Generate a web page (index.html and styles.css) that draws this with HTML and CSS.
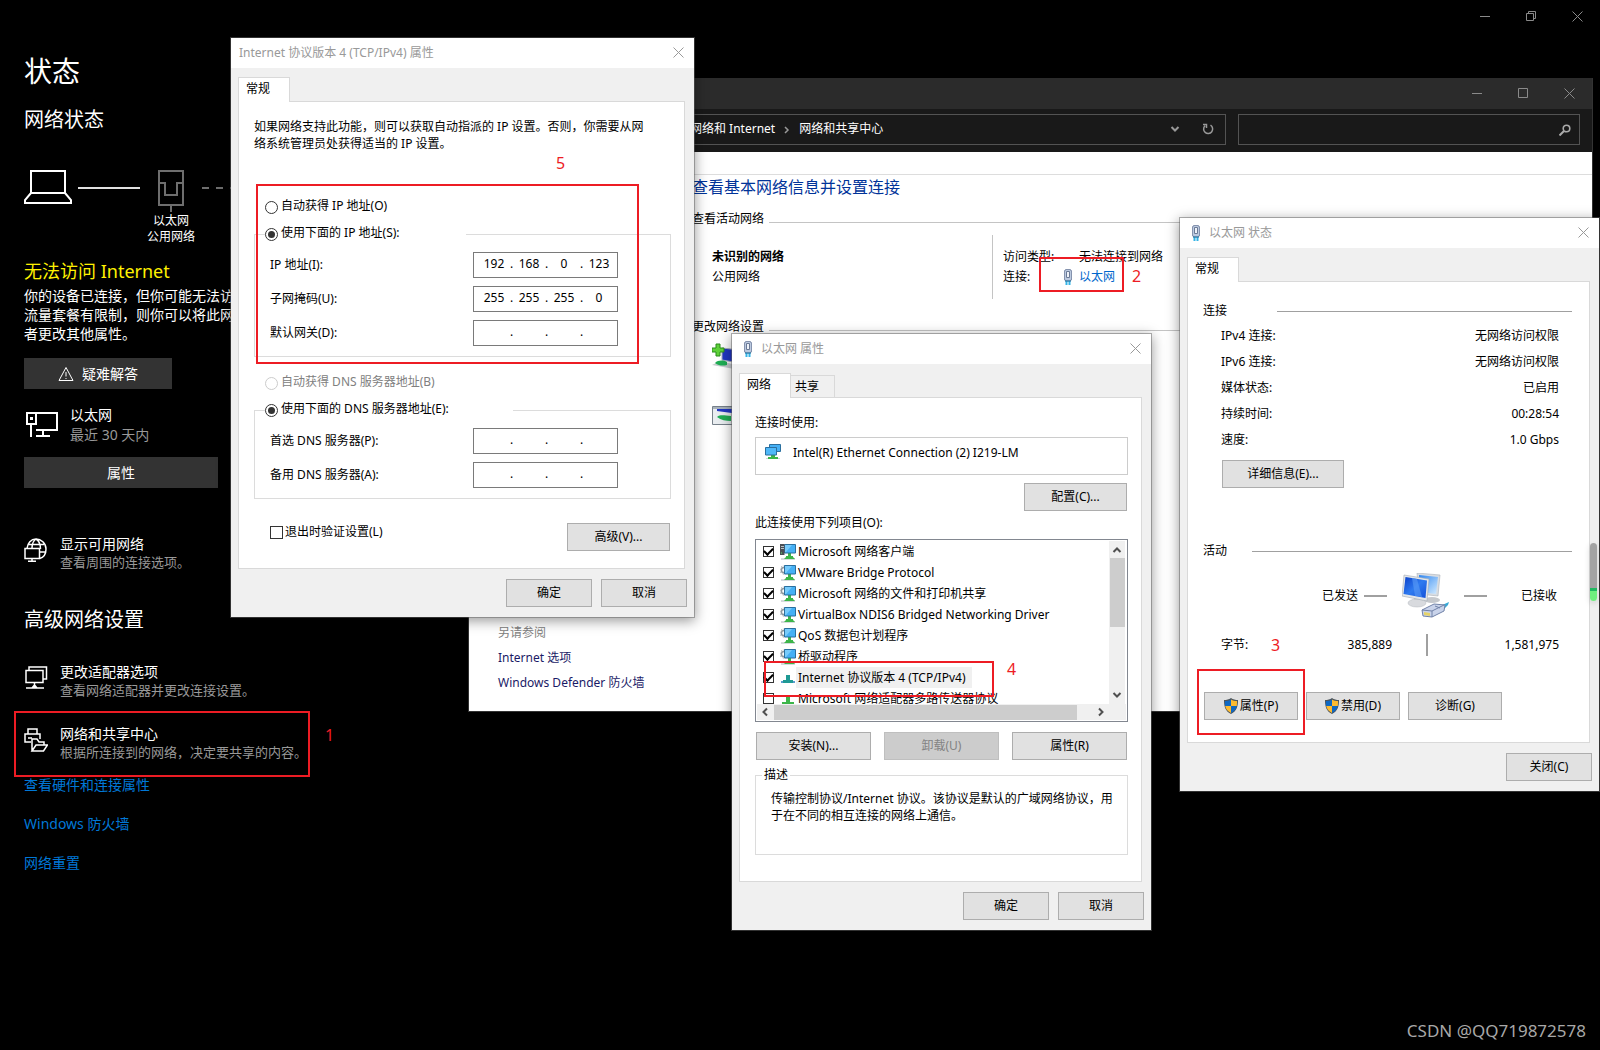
FILE: index.html
```html
<!DOCTYPE html>
<html lang="zh-CN">
<head>
<meta charset="utf-8">
<meta name="viewport" content="width=device-width, initial-scale=1">
<title>网络状态</title>
<link rel="stylesheet" href="styles.css">
</head>
<body>
<svg class="defs" aria-hidden="true">
  <symbol id="close" viewBox="0 0 11 11"><path d="M.5.5l10 10M10.500.5l-10 10" fill="none" stroke="currentColor"/></symbol>
  <symbol id="min" viewBox="0 0 11 11"><path d="M0 5.500h10" fill="none" stroke="currentColor"/></symbol>
  <symbol id="max" viewBox="0 0 11 11"><path d="M.5.5h9v9h-9z" fill="none" stroke="currentColor"/></symbol>
  <symbol id="restore" viewBox="0 0 11 11"><path d="M.5 2.500h7v7h-7zM2.500 2.500v-2h7v7h-2" fill="none" stroke="currentColor"/></symbol>
  <symbol id="plug" viewBox="0 0 10 16">
    <path d="M2.500.5h5v1h1V11h-1v1h-5v-1h-1V1.500h1z" fill="#bccae0" stroke="#8593ae"/>
    <path d="M3.500 2.500h3v6h-3z" fill="#eef2f9" stroke="#6b7a96"/>
    <path d="M3.500 12v4M6.500 12v4" stroke="#35b4e6" stroke-width="2"/><path d="M2 12h6" stroke="#1c6f9c"/>
  </symbol>
  <symbol id="pc" viewBox="0 0 16 16">
    <path d="M1 14h14v2H1z" fill="#d5dadd"/>
    <path d="M8 9h3v3h2v1l2 2H4l2-2v-1h2z" fill="#3cb549"/>
    <path d="M4.500.5h11v8.500h-11z" fill="#45b0f5" stroke="#2b6f9e"/><path d="M5 1h7L6 8H5z" fill="#77cbfb"/>
  </symbol>
  <symbol id="client" viewBox="0 0 16 16">
    <use href="#pc"/><path d="M0 0h4.500v11H0z" fill="#4a4f54"/><path d="M1 2.500h3M1 4.500h3" stroke="#b9c0c6"/><path d="M1 9h1" stroke="#5fe06a"/>
  </symbol>
  <symbol id="service" viewBox="0 0 16 16">
    <circle cx="4" cy="5" r="2.600" fill="none" stroke="#8f989e" stroke-width="1.500"/>
    <circle cx="4" cy="5" r="4" fill="none" stroke="#8f989e" stroke-dasharray="1.500 1.500"/>
    <use href="#pc"/>
  </symbol>
  <symbol id="protocol" viewBox="0 0 16 16"><path d="M6 5h4v5h3v2h1v1H2v-1h1v-2h3z" fill="#1f9a94"/><path d="M1 11h2v2H1zM13 11h2v2h-2z" fill="#5b9bd0"/></symbol>
  <symbol id="protocol2" viewBox="0 0 16 16"><path d="M6 6h4v5h4v3H2v-3h4z" fill="#3cb549"/></symbol>
  <symbol id="adapter" viewBox="0 0 16 16">
    <path d="M1 14h14v1H1z" fill="#cfd5d8"/><path d="M6 11h4v2h3v2H3v-2h3z" fill="#3cb549"/>
    <path d="M4.500.5h11v7h-11z" fill="#45b0f5" stroke="#2b6f9e"/><path d="M.5 3.500h11v7.500H.5z" fill="#4fb8f9" stroke="#2b6f9e"/>
  </symbol>
  <symbol id="shield" viewBox="0 0 14 16">
    <path d="M7 0c2 1.400 4.500 2 7 2 0 6-1 11-7 14C1 13 0 8 0 2c2.500 0 5-.6 7-2z" fill="#4b545c"/>
    <path d="M7 1.400V8H1.200C1 6.500 1 4.500 1 3c2.200-.1 4.200-.6 6-1.600z" fill="#0f68c2"/>
    <path d="M7 1.400V8h5.800c.2-1.500.2-3.500.2-5-2.200-.1-4.200-.6-6-1.600zM7 8H1.200C1.800 11 3.500 13.200 7 14.900z" fill="#fdbb30"/>
    <path d="M7 8h5.800c-.6 3-2.300 5.200-5.800 6.900z" fill="#0f68c2"/>
  </symbol>
  <symbol id="chev" viewBox="0 0 10 10"><path d="M1.500 3l3.500 3.500L8.500 3" fill="none" stroke="currentColor" stroke-width="2"/></symbol>
</svg>

<main class="settings">
  <header class="captions">
    <button aria-label="最小化"><svg><use href="#min"/></svg></button>
    <button aria-label="还原"><svg><use href="#restore"/></svg></button>
    <button aria-label="关闭"><svg><use href="#close"/></svg></button>
  </header>
  <div class="column">
    <h1>状态</h1>
    <h2>网络状态</h2>
    <div class="diagram">
      <svg class="laptop" viewBox="0 0 48 34"><path d="M7 1h34v22H7zM7 23L1 30v3h46v-3l-6-7" fill="none" stroke="#fff" stroke-width="2"/></svg>
      <span class="wire"></span>
      <div class="node">
        <svg class="port" viewBox="0 0 26 42"><path d="M1 1h24v34H1zM13 35v7M1 13h6v12h12V13h6" fill="none" stroke="#6e6e6e" stroke-width="2"/></svg>
        <span>以太网</span><span>公用网络</span>
      </div>
      <span class="dashes"></span>
    </div>
    <h3>无法访问 Internet</h3>
    <p class="explain">你的设备已连接，但你可能无法访<br>流量套餐有限制，则你可以将此网<br>者更改其他属性。</p>
    <button class="flat trouble"><svg viewBox="0 0 16 16"><path d="M8 1.500L15 14.500H1z M8 6v4.500M8 12v1" fill="none" stroke="#fff"/></svg>疑难解答</button>
    <div class="conn">
      <svg viewBox="0 0 32 26"><path d="M10 1h21v17H10M1 1h9v11H1zM5 12v13M17 18v6M10 24h14" fill="none" stroke="#fff" stroke-width="2"/><path d="M4 5h3v3H4z" fill="#fff"/></svg>
      <div><strong>以太网</strong><span>最近 30 天内</span></div>
    </div>
    <button class="flat props">属性</button>
    <a class="item first" href="#">
      <svg viewBox="0 0 24 24" fill="none" stroke="#fff" stroke-width="1.500"><path d="M3 10.500C3.500 5 7 1 12 1s10 4 10 10c0 5-2.500 8.500-6.500 9.500M12 1C9 3 8 6 8 10M12 1c3.500 2 4.500 6 4.500 10M4.500 6.500h15.500M16 14h5"/><path d="M1 10.500h14.500v10H1zM8 20.500V23M4 23.200h8"/></svg>
      <span>显示可用网络<small>查看周围的连接选项。</small></span>
    </a>
    <h2 class="advanced">高级网络设置</h2>
    <a class="item adapters" href="#">
      <svg viewBox="0 0 24 24" fill="none" stroke="#fff" stroke-width="1.500"><path d="M2 4.500h17v12H2zM5 4V1h17.500v12H19M10.500 16.500v5M2 22h6M13 22h7M8 22l2.500-3 2.500 3z"/></svg>
      <span>更改适配器选项<small>查看网络适配器并更改连接设置。</small></span>
    </a>
    <a class="item sharing" href="#">
      <svg viewBox="0 0 24 24" fill="none" stroke="#fff" stroke-width="1.500"><path d="M4 6V1h9v5M7 14H1V6h15v5M4 10h4"/><path d="M8 23V11h5l2 3h5v3M8 23l4-6h11.500l-4 6z"/></svg>
      <span>网络和共享中心<small>根据所连接到的网络，决定要共享的内容。</small></span>
    </a>
    <nav class="links"><a href="#">查看硬件和连接属性</a><a href="#">Windows 防火墙</a><a href="#">网络重置</a></nav>
  </div>
</main>

<section class="explorer" aria-label="网络和共享中心">
  <header class="captions">
    <button aria-label="最小化"><svg><use href="#min"/></svg></button>
    <button aria-label="最大化"><svg><use href="#max"/></svg></button>
    <button aria-label="关闭"><svg><use href="#close"/></svg></button>
  </header>
  <div class="toolbar">
    <div class="address">
      <span>网络和 Internet</span><svg class="crumb" viewBox="0 0 6 8"><path d="M1 1l3 3-3 3" fill="none" stroke="#999" stroke-width="1.500"/></svg><span class="here">网络和共享中心</span>
      <svg class="drop"><use href="#chev"/></svg>
      <button aria-label="刷新"><svg viewBox="0 0 12 12"><path d="M8.500 2.200A4.500 4.500 0 1 1 3 2.800M1 1.500h3.500V5" fill="none" stroke="#999" stroke-width="1.500"/></svg></button>
    </div>
    <div class="search"><input type="text" aria-label="搜索"><svg viewBox="0 0 12 12"><circle cx="7.500" cy="4.500" r="3.300" fill="none" stroke="#aaa" stroke-width="1.600"/><path d="M5 7L.5 11.500" stroke="#aaa" stroke-width="2"/></svg></div>
  </div>
  <div class="content">
    <aside><span>另请参阅</span><a href="#">Internet 选项</a><a href="#">Windows Defender 防火墙</a></aside>
    <div class="center">
      <h2>查看基本网络信息并设置连接</h2>
      <div class="head"><span>查看活动网络</span></div>
      <div class="network">
        <div><b>未识别的网络</b><span>公用网络</span></div>
        <dl><dt>访问类型:</dt><dd>无法连接到网络</dd><dt>连接:</dt><dd class="linked"><svg><use href="#plug"/></svg><a href="#">以太网</a></dd></dl>
      </div>
      <div class="head second"><span>更改网络设置</span></div>
      <div class="tasks">
        <svg viewBox="0 0 32 32"><path d="M10 6l18 2v13l-18-3z" fill="#2237c4" stroke="#a9b0c4"/><path d="M0 23l8-4 20 5v4z" fill="#c7ccd0"/><path d="M3 21c3-3 8-3 12-1v3c-4 1-8 1-12-2z" fill="#1fae54"/><path d="M4 2h4v4h4v4H8v4H4v-4H0V6h4z" fill="#5fd23a" stroke="#2b8b1c"/></svg>
        <svg viewBox="0 0 32 32"><path d="M.5 6.500h31v18H.5z" fill="#e9edf0" stroke="#76808a"/><path d="M1 7h30v2H1z" fill="#a8b2bb"/><path d="M5 9h22v5l-22-3z" fill="#2237c4"/><path d="M5 17c4-3 8-1 14-1v5c-5 0-10-1-14-4z" fill="#1fae54"/></svg>
      </div>
    </div>
  </div>
</section>

<section class="dialog ipv4" aria-label="Internet 协议版本 4 (TCP/IPv4) 属性">
  <header><h2>Internet 协议版本 4 (TCP/IPv4) 属性</h2><button aria-label="关闭"><svg><use href="#close"/></svg></button></header>
  <div class="tabs"><button class="on">常规</button></div>
  <form class="panel">
    <p>如果网络支持此功能，则可以获取自动指派的 IP 设置。否则，你需要从网<br>络系统管理员处获得适当的 IP 设置。</p>
    <label class="radio auto-ip"><input type="radio" name="ip">自动获得 IP 地址(O)</label>
    <fieldset>
      <legend><label class="radio"><input type="radio" name="ip" checked>使用下面的 IP 地址(S):</label></legend>
      <div class="field"><label for="ip1">IP 地址(I):</label><div class="quad"><input id="ip1" value="192">.<input aria-label="IP 2" value="168">.<input aria-label="IP 3" value="0">.<input aria-label="IP 4" value="123"></div></div>
      <div class="field"><label for="mask1">子网掩码(U):</label><div class="quad"><input id="mask1" value="255">.<input aria-label="掩码 2" value="255">.<input aria-label="掩码 3" value="255">.<input aria-label="掩码 4" value="0"></div></div>
      <div class="field"><label for="gw1">默认网关(D):</label><div class="quad"><input id="gw1">.<input aria-label="网关 2">.<input aria-label="网关 3">.<input aria-label="网关 4"></div></div>
    </fieldset>
    <label class="radio auto-dns"><input type="radio" name="dns" disabled>自动获得 DNS 服务器地址(B)</label>
    <fieldset>
      <legend class="wide"><label class="radio"><input type="radio" name="dns" checked>使用下面的 DNS 服务器地址(E):</label></legend>
      <div class="field"><label for="dnsa">首选 DNS 服务器(P):</label><div class="quad"><input id="dnsa">.<input aria-label="首选 2">.<input aria-label="首选 3">.<input aria-label="首选 4"></div></div>
      <div class="field"><label for="dnsb">备用 DNS 服务器(A):</label><div class="quad"><input id="dnsb">.<input aria-label="备用 2">.<input aria-label="备用 3">.<input aria-label="备用 4"></div></div>
    </fieldset>
    <div class="last"><label class="tick"><input type="checkbox">退出时验证设置(L)</label><button type="button" class="btn w103">高级(V)...</button></div>
  </form>
  <footer><button class="btn w86">确定</button><button class="btn w86">取消</button></footer>
</section>

<section class="dialog ether" aria-label="以太网 属性">
  <header><svg class="plug"><use href="#plug"/></svg><h2>以太网 属性</h2><button aria-label="关闭"><svg><use href="#close"/></svg></button></header>
  <div class="tabs"><button class="on">网络</button><button>共享</button></div>
  <form class="panel">
    <span class="cap">连接时使用:</span>
    <div class="device"><svg><use href="#adapter"/></svg>Intel(R) Ethernet Connection (2) I219-LM</div>
    <button type="button" class="btn w103 config">配置(C)...</button>
    <span class="cap items-cap">此连接使用下列项目(O):</span>
    <div class="list">
      <ul>
        <li><label><input type="checkbox" checked><svg><use href="#client"/></svg><span>Microsoft 网络客户端</span></label></li>
        <li><label><input type="checkbox" checked><svg><use href="#service"/></svg><span>VMware Bridge Protocol</span></label></li>
        <li><label><input type="checkbox" checked><svg><use href="#service"/></svg><span>Microsoft 网络的文件和打印机共享</span></label></li>
        <li><label><input type="checkbox" checked><svg><use href="#service"/></svg><span>VirtualBox NDIS6 Bridged Networking Driver</span></label></li>
        <li><label><input type="checkbox" checked><svg><use href="#service"/></svg><span>QoS 数据包计划程序</span></label></li>
        <li><label><input type="checkbox" checked><svg><use href="#service"/></svg><span>桥驱动程序</span></label></li>
        <li><label><input type="checkbox" checked><svg><use href="#protocol"/></svg><span class="sel">Internet 协议版本 4 (TCP/IPv4)</span></label></li>
        <li><label><input type="checkbox"><svg><use href="#protocol2"/></svg><span>Microsoft 网络适配器多路传送器协议</span></label></li>
      </ul>
      <div class="vbar"><svg class="up"><use href="#chev"/></svg><i></i><svg><use href="#chev"/></svg></div>
      <div class="hbar"><svg class="left"><use href="#chev"/></svg><i></i><svg class="right"><use href="#chev"/></svg></div>
    </div>
    <div class="trio"><button type="button" class="btn">安装(N)...</button><button type="button" class="btn" disabled>卸载(U)</button><button type="button" class="btn">属性(R)</button></div>
    <fieldset><legend>描述</legend><p>传输控制协议/Internet 协议。该协议是默认的广域网络协议，用<br>于在不同的相互连接的网络上通信。</p></fieldset>
  </form>
  <footer><button class="btn w86">确定</button><button class="btn w86">取消</button></footer>
</section>

<section class="dialog status" aria-label="以太网 状态">
  <header><svg class="plug"><use href="#plug"/></svg><h2>以太网 状态</h2><button aria-label="关闭"><svg><use href="#close"/></svg></button></header>
  <div class="tabs"><button class="on">常规</button></div>
  <div class="panel">
    <h3 class="rule">连接</h3>
    <table>
      <tr><th>IPv4 连接:</th><td>无网络访问权限</td></tr>
      <tr><th>IPv6 连接:</th><td>无网络访问权限</td></tr>
      <tr><th>媒体状态:</th><td>已启用</td></tr>
      <tr><th>持续时间:</th><td>00:28:54</td></tr>
      <tr><th>速度:</th><td>1.0 Gbps</td></tr>
    </table>
    <button class="btn details">详细信息(E)...</button>
    <h3 class="rule activity">活动</h3>
    <div class="traffic">
      <span>已发送</span><i></i>
      <svg viewBox="0 0 48 46">
        <defs><linearGradient id="scr" x2="1" y2="1"><stop stop-color="#0a3fc9"/><stop offset=".5" stop-color="#2f7bf0"/><stop offset="1" stop-color="#1450d8"/></linearGradient><linearGradient id="scr2" x2="1" y2="1"><stop stop-color="#2f86f0"/><stop offset="1" stop-color="#d4ecff"/></linearGradient></defs>
        <ellipse cx="30" cy="27" rx="8" ry="3" fill="#c5c8cc"/>
        <path d="M15 0l23 2-2 21-19-2z" fill="#d9dde2" stroke="#aab0b8" stroke-width=".6"/><path d="M17 2l19 2-2 17-17-2z" fill="url(#scr2)"/>
        <path d="M12 24h8l1 6h-9z" fill="#c2c6cb"/><ellipse cx="15" cy="30" rx="9" ry="4" fill="#d8dade" stroke="#b3b7bc" stroke-width=".5"/>
        <path d="M2 2l25 4-2 22-25-5z" fill="#e2e6ea" stroke="#a4abb4" stroke-width=".6"/><path d="M3.500 4L25 7.500 23.500 25 1.500 21z" fill="url(#scr)"/><path d="M10 5l5 1 5 18-7-1z" fill="#5b9cf7" opacity=".6"/>
        <path d="M38 33l9-4-1 3-5 5z" fill="#38a9d6"/><path d="M20 37l12-6 11 1-1 6-12 6-9-1z" fill="#c9d3ea" stroke="#7182a8"/><path d="M20 37l10 1v6M30 38l12-6M33 33l5 2" fill="none" stroke="#7182a8"/><path d="M22 39l6 1v3l-6-1z" fill="#e5d36a"/>
      </svg>
      <i></i><span>已接收</span>
    </div>
    <div class="bytes"><span>字节:</span><span>385,889</span><i></i><span>1,581,975</span></div>
    <div class="actions"><button class="btn"><svg><use href="#shield"/></svg>属性(P)</button><button class="btn"><svg><use href="#shield"/></svg>禁用(D)</button><button class="btn">诊断(G)</button></div>
  </div>
  <footer><button class="btn w86">关闭(C)</button></footer>
</section>

<div class="thumb"></div>
<div class="mark m1"></div><span class="num n1">1</span>
<div class="mark m2"></div><span class="num n2">2</span>
<div class="mark m3"></div><span class="num n3">3</span>
<div class="mark m4"></div><span class="num n4">4</span>
<div class="mark m5"></div><span class="num n5">5</span>
<div class="watermark">CSDN @QQ719872578</div>
</body>
</html>
```
FILE: styles.css
```css
* { box-sizing: border-box; }
body {
  margin: 0; min-height: 100vh; position: relative; overflow: hidden; background: #000; color: #000;
  font: 12px/18px "Noto Sans", "Noto Sans CJK SC", sans-serif;
}
h1, h2, h3, p, ul, dl, dd { margin: 0; padding: 0; font-weight: 400; }
button, input { font: inherit; color: inherit; margin: 0; padding: 0; border: 0; background: none; }
a { color: inherit; text-decoration: none; }
svg { display: block; flex: none; }
.defs { position: absolute; width: 0; height: 0; }

/* caption buttons */
.captions { display: flex; justify-content: flex-end; height: 32px; color: #8a8a8a; }
.captions button { width: 46px; display: grid; place-items: center; }
.captions svg { width: 11px; height: 11px; }

/* settings page */
.settings { color: #fff; }
.column { padding: 21px 24px; font-size: 14px; display: flex; flex-direction: column; align-items: flex-start; }
.column h1 { font-size: 28px; line-height: 36px; }
.column h2 { font-size: 20px; line-height: 28px; margin-top: 17px; }
.diagram { display: flex; margin-top: 36px; height: 75px; }
.laptop { width: 48px; height: 34px; margin-right: 6px; }
.wire { width: 62px; height: 2px; margin-top: 17px; background: #e0e0e0; }
.node { width: 62px; display: flex; flex-direction: column; align-items: center; font-size: 12px; line-height: 16px; }
.port { width: 26px; height: 42px; margin-bottom: 1px; }
.dashes { width: 29px; height: 2px; margin-top: 17px; background: repeating-linear-gradient(90deg, #6e6e6e 0 7px, transparent 7px 14px); }
.column h3 { font-size: 18px; line-height: 24px; margin-top: 14px; color: #fff100; }
.explain { line-height: 19px; margin-top: 3px; white-space: nowrap; }
.flat { background: #333; height: 31px; display: flex; align-items: center; justify-content: center; gap: 8px; }
.flat svg { width: 16px; height: 16px; }
.trouble { width: 148px; margin-top: 15px; }
.props { width: 194px; margin-top: 12px; }
.conn { display: flex; gap: 12px; margin-top: 16px; padding-left: 2px; line-height: 20px; }
.conn svg { width: 32px; height: 26px; margin-top: 7px; }
.conn strong, .conn span { display: block; font-weight: 400; }
.conn span, .item small { color: #999; }
.item { display: flex; gap: 12px; line-height: 18px; }
.item svg { width: 24px; height: 24px; margin-top: 3px; }
.item small { display: block; font-size: 13px; }
.item.first { margin-top: 47px; }
.column h2.advanced { margin-top: 35px; }
.adapters { margin-top: 29px; }
.sharing { margin-top: 26px; }
.links { display: flex; flex-direction: column; gap: 19px; margin-top: 14px; line-height: 20px; color: #0078d7; }

/* network centre window */
.explorer { position: absolute; left: 468px; top: 78px; width: 1125px; border: 1px solid #333; border-top: 0; background: #fff; }
.explorer .captions { background: #2b2b2b; height: 31px; }
.toolbar { background: #191919; height: 43px; display: flex; gap: 12px; padding: 5px 12px 7px 130px; color: #fff; }
.address { flex: 1; border: 1px solid #535353; display: flex; align-items: center; padding-left: 90px; padding-bottom: 2px; }
.crumb { width: 6px; height: 8px; margin: 2px 9px 0; }
.here { flex: 1; }
.drop { width: 10px; height: 10px; margin-right: 11px; color: #999; }
.address button { width: 34px; display: grid; place-items: center; }
.address button svg, .search svg { width: 12px; height: 12px; }
.search { width: 342px; border: 1px solid #535353; display: flex; align-items: center; padding-right: 8px; }
.search input { flex: 1; height: 26px; outline: 0; }
.content { display: grid; grid-template-columns: 223px 1fr; margin-top: 22px; border-top: 1px solid #ddd; min-height: 537px; }
aside { display: flex; flex-direction: column; justify-content: flex-end; gap: 8px; padding: 0 0 20px 29px; line-height: 17px; color: #1a1a66; white-space: nowrap; }
aside span { color: #808080; }
.center h2 { font-size: 16px; line-height: 24px; color: #003399; }
.head { display: flex; align-items: center; gap: 5px; margin-top: 11px; }
.head::after { content: ""; flex: 1; height: 1px; margin-top: 6px; background: #c4c4c4; }
.head.second { margin-top: 19px; }
.network { display: grid; grid-template-columns: 300px 1fr; margin-top: 7px; height: 64px; line-height: 20px; }
.network > div { display: flex; flex-direction: column; padding: 12px 20px; }
.network dl { display: grid; grid-template-columns: 60px 1fr; align-content: start; padding: 12px 10px; border-left: 1px solid #c4c4c4; }
.network dd { padding-left: 16px; }
.network dd.linked { display: flex; align-items: center; gap: 6px; padding: 0; color: #0066cc; }
.linked svg, .plug { width: 10px; height: 16px; }
.tasks { display: flex; flex-direction: column; gap: 26px; padding: 6px 20px; }
.tasks svg { width: 32px; height: 32px; }

/* dialogs */
.dialog {
  position: absolute; background: #f0f0f0; background-clip: padding-box;
  border: 1px solid rgba(100, 100, 100, .5); box-shadow: 0 3px 12px rgba(0, 0, 0, .4);
}
.ipv4 { left: 230px; top: 37px; width: 465px; }
.ether { left: 731px; top: 333px; width: 421px; }
.status { left: 1179px; top: 217px; width: 421px; }
.dialog header { height: 30px; background: #fff; display: flex; align-items: center; gap: 8px; padding: 0 10px 1px 8px; color: #999; }
.dialog header h2 { font-size: 12px; flex: 1; }
.dialog header .plug { margin-left: 3px; }
.dialog header button svg { width: 11px; height: 11px; }
.tabs { display: flex; align-items: flex-end; padding: 9px 7px 0; }
.tabs button { height: 22px; width: 44px; border: 1px solid #d9d9d9; border-width: 1px 1px 0 0; padding: 0 0 0 4px; text-align: left; }
.tabs .on { height: 25px; width: 52px; margin-bottom: -1px; padding: 0 0 3px 7px; background: #fff; border-left-width: 1px; position: relative; }
.panel { margin: 0 9px 0 7px; border: 1px solid #d9d9d9; background: #fff; padding: 16px 13px 17px 15px; display: flex; flex-direction: column; }
.panel p { line-height: 17px; white-space: nowrap; }
.dialog footer { display: flex; justify-content: flex-end; gap: 9px; padding: 10px 7px; }
.btn { height: 28px; background: #e1e1e1; border: 1px solid #adadad; display: flex; align-items: center; justify-content: center; gap: 2px; }
.btn:disabled { background: #ccc; border-color: #bfbfbf; color: #838383; }
.w86 { width: 86px; }
.w103 { width: 103px; margin-right: 1px; }
fieldset { margin: 0; min-width: 0; border: 1px solid #dcdcdc; padding: 0 15px 10px; }
legend { padding: 0; }

/* IPv4 form */
.radio, .tick { display: flex; align-items: center; gap: 3px; }
input[type="radio"], input[type="checkbox"] { appearance: none; width: 13px; height: 13px; border: 1px solid #333; background: #fff; flex: none; display: grid; place-items: center; }
input[type="radio"] { border-radius: 50%; margin-top: 2px; }
input[type="radio"]:checked::after { content: ""; width: 7px; height: 7px; border-radius: 50%; background: #333; }
input[type="radio"]:disabled { border-color: #ccc; }
.auto-ip { margin: 45px 0 9px 11px; }
.auto-dns { margin: 16px 0 9px 11px; color: #808080; }
.ipv4 legend { margin-left: -5px; margin-bottom: 8px; padding-bottom: 2px; width: 201px; }
.ipv4 legend.wide { width: 248px; }
.field { display: grid; grid-template-columns: 203px 145px; align-items: center; }
.field + .field { margin-top: 8px; }
.quad { height: 26px; border: 1px solid #7a7a7a; display: grid; grid-template-columns: 28px 7px 28px 7px 28px 7px 28px; justify-items: center; align-items: center; padding: 0 0 2px 6px; }
.quad input { width: 28px; height: 18px; text-align: center; }
.last { display: flex; justify-content: space-between; align-items: flex-start; margin-top: 24px; padding-left: 16px; }
.tick { gap: 2px; }

/* adapter properties */
.device { height: 38px; border: 1px solid #ccc; margin-top: 5px; display: flex; gap: 12px; padding: 6px 9px; }
.device svg { width: 16px; height: 16px; }
.config { align-self: flex-end; margin-top: 8px; }
.items-cap { margin-top: 3px; }
.list { height: 183px; margin-top: 7px; border: 1px solid #828790; padding: 1px; display: grid; grid-template: 163px 16px / 1fr 17px; }
.list ul { list-style: none; overflow: hidden; }
.list label { display: flex; align-items: center; height: 21px; padding-left: 6px; }
.list input[type="checkbox"] { width: 11px; height: 11px; margin-right: 6px; }
.list input:checked::after { content: ""; width: 7px; height: 4px; border: solid #000; border-width: 0 0 2px 2px; transform: rotate(-45deg) translate(1px, -1px); }
.list li svg { width: 16px; height: 16px; }
.list li span { line-height: 21px; padding: 0 6px 0 2px; white-space: nowrap; }
.list .sel { background: #f0f0f0; }
.vbar, .hbar { background: #f0f0f0; display: flex; align-items: center; justify-content: space-between; color: #505050; }
.vbar { flex-direction: column; margin-right: 1px; padding: 4px 0; }
.list .vbar svg, .list .hbar svg { width: 10px; height: 10px; }
.vbar i { width: 15px; height: 69px; background: #cdcdcd; margin: 3px 0 auto; }
.hbar { grid-column: 1 / 3; padding: 0 20px 0 3px; }
.hbar i { width: 303px; height: 15px; background: #cdcdcd; margin: 0 auto 0 4px; }
.up { transform: rotate(180deg); }
.left { transform: rotate(90deg); }
.right { transform: rotate(-90deg); }
.trio { display: grid; grid-template-columns: repeat(3, 115px); justify-content: space-between; margin-top: 10px; padding: 0 1px; }
.ether fieldset { margin-top: 6px; padding-bottom: 30px; }
.ether legend { margin: 0 0 6px -9px; padding: 0 2px; }
.ether .panel { padding-bottom: 26px; }

/* adapter status */
.status .panel { padding: 20px 17px 22px 15px; }
.rule { font-size: 12px; display: grid; grid-template-columns: 74px 1fr; align-items: center; }
.rule::after { content: ""; height: 1px; background: #a0a0a0; }
.rule.activity { margin-top: 54px; grid-template-columns: 49px 1fr; }
.status table { border-collapse: collapse; margin: 3px 13px 0 18px; }
.status th, .status td { height: 26px; padding: 0; font-weight: 400; text-align: left; }
.status td { text-align: right; }
.details { width: 122px; margin: 7px 0 0 19px; }
.traffic { display: flex; align-items: center; margin: 13px 15px 0 119px; }
.traffic svg { width: 48px; height: 46px; }
.traffic i { width: 23px; height: 2px; background: #a0a0a0; margin: 0 15px 0 6px; }
.traffic svg + i { margin: 0 auto 0 14px; }
.bytes { display: grid; grid-template-columns: 60px 111px 34px 2px 1fr; align-items: center; margin: 15px 13px 0 18px; text-align: right; line-height: 22px; }
.bytes span:first-child { text-align: left; }
.bytes i { grid-column: 4; height: 22px; background: #a0a0a0; }
.actions { display: flex; gap: 8px; margin-top: 36px; padding-left: 1px; }
.actions .btn { width: 94px; }
.actions svg { width: 14px; height: 16px; }
.thumb { position: absolute; left: 1590px; top: 543px; width: 7px; height: 58px; border-radius: 4px; background: linear-gradient(#a3a3a3 0 45px, #20b860 45px 48px, #6fee7e 48px); box-shadow: 0 2px 6px rgba(0, 0, 0, .15); }

/* red annotations */
.mark { position: absolute; border: 2px solid #ed1c24; pointer-events: none; }
.num { position: absolute; font-size: 16px; line-height: 22px; color: #ed1c24; }
.m1 { left: 14px; top: 711px; width: 296px; height: 66px; }
.n1 { left: 325px; top: 724px; }
.m2 { left: 1039px; top: 257px; width: 85px; height: 35px; }
.n2 { left: 1132px; top: 265px; }
.m3 { left: 1197px; top: 669px; width: 108px; height: 66px; }
.n3 { left: 1271px; top: 634px; }
.m4 { left: 764px; top: 661px; width: 230px; height: 36px; }
.n4 { left: 1007px; top: 658px; }
.m5 { left: 256px; top: 184px; width: 383px; height: 180px; }
.n5 { left: 556px; top: 152px; }
.watermark { position: absolute; right: 14px; bottom: 8px; font-size: 17px; line-height: 22px; color: #a8a8a8; }
```
